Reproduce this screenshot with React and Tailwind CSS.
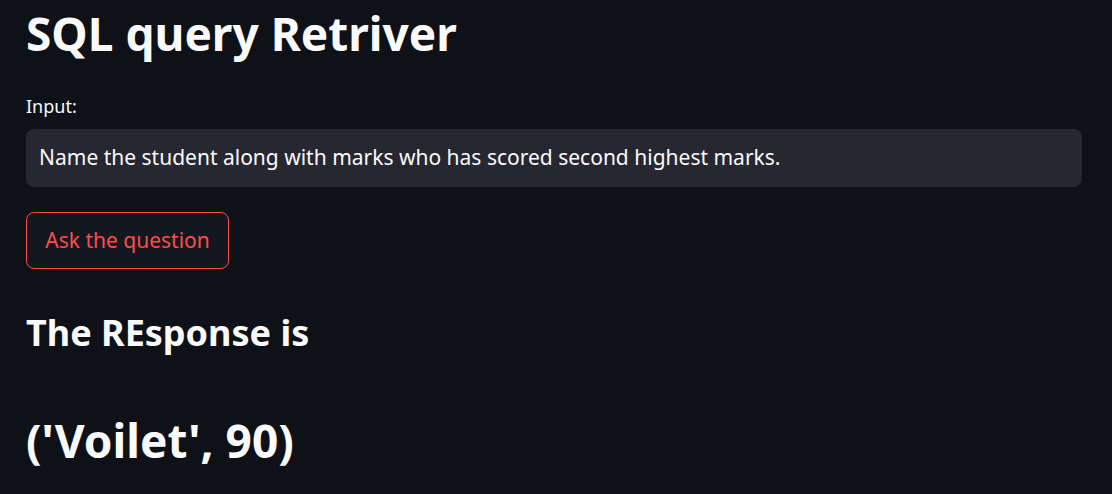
export default function App() {
  return (
    <div className="min-h-screen bg-[#0e1117] px-[26px] text-[#fafafa] font-['Noto_Sans',sans-serif]">
      <h1 className="text-[46px] font-bold leading-[66px]">SQL query Retriver</h1>

      <label className="mt-[29px] block text-[18px] leading-[22px]">Input:</label>
      <div className="mt-[12px] flex h-[58px] w-[1056px] items-center rounded-[8px] bg-[#262730] px-[13px] text-[21px]">
        Name the student along with marks who has scored second highest marks.
      </div>

      <button className="mt-[25px] flex h-[57px] w-[203px] items-center justify-center rounded-[8px] border border-[#ff4b4b] bg-[#131720] text-[21px] text-[#ff4b4b]">
        Ask the question
      </button>

      <h3 className="mt-[40px] text-[36px] font-bold leading-[48px]">The REsponse is</h3>
      <div className="mt-[55px] text-[46px] font-bold leading-[56px]">('Voilet', 90)</div>
    </div>
  );
}
